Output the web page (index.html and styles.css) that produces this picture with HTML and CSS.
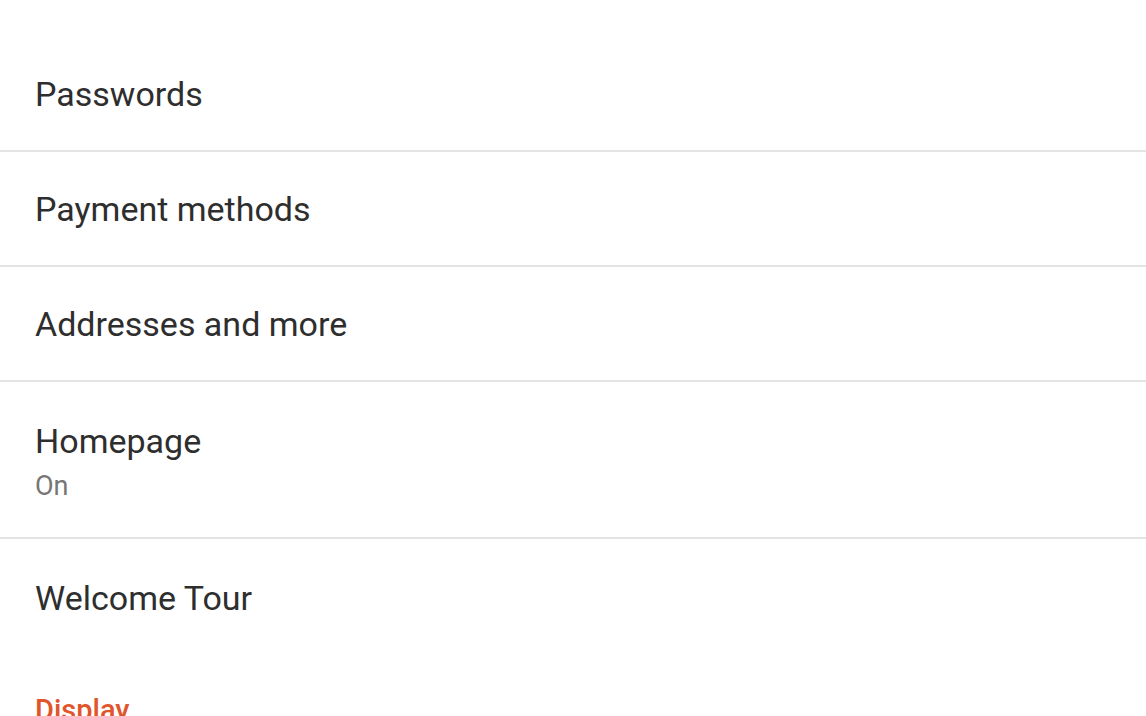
FILE: index.html
```html
<!DOCTYPE html>
<html>
<head>
<meta charset="utf-8">
<link rel="stylesheet" href="styles.css">
</head>
<body>
<div class="settings">
  <div class="top-space"></div>
  <div class="row"><div class="title">Passwords</div></div>
  <div class="row"><div class="title">Payment methods</div></div>
  <div class="row"><div class="title">Addresses and more</div></div>
  <div class="row tall"><div class="title">Homepage</div><div class="summary">On</div></div>
  <div class="row last"><div class="title">Welcome Tour</div></div>
  <div class="section-header">Display</div>
</div>
</body>
</html>
```
FILE: styles.css
```css
html, body {
  margin: 0;
  padding: 0;
  background: #ffffff;
  overflow: hidden;
}
.settings {
  font-family: Roboto, "Liberation Sans", sans-serif;
  width: 1146px;
  height: 716px;
  overflow: hidden;
}
.top-space {
  height: 37px;
}
.row {
  height: 115px;
  box-sizing: border-box;
  padding-left: 35px;
  display: flex;
  flex-direction: column;
  justify-content: center;
  border-bottom: 2px solid #e4e4e4;
}
.row.tall {
  height: 157px;
  padding-top: 4px;
}
.row.last {
  border-bottom: none;
  height: 117px;
}
.title {
  font-size: 34px;
  color: #2e2e2e;
  line-height: 40px;
}
.summary {
  font-size: 27px;
  color: #767676;
  line-height: 32px;
  margin-top: 9px;
}
.section-header {
  padding: 37px 0 0 35px;
  font-size: 29px;
  line-height: 34px;
  font-weight: 500;
  color: #e0552c;
}
```
